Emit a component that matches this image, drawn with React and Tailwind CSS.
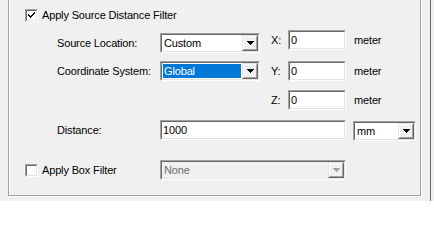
import React from 'react';

const Arrow = ({ color }) => (
  <svg width="7" height="4" viewBox="0 0 7 4" shapeRendering="crispEdges">
    <path d="M0 0h7L3.5 4z" fill={color} />
  </svg>
);

const DropButton = ({ disabled }) => (
  <div className="w-[16px] h-full border border-t-[#e3e3e3] border-l-[#e3e3e3] border-b-[#696969] border-r-[#696969]">
    <div className="h-full border border-t-white border-l-white border-b-[#a0a0a0] border-r-[#a0a0a0] bg-[#f0f0f0] flex items-center justify-center">
      <Arrow color={disabled ? '#a0a0a0' : '#000'} />
    </div>
  </div>
);

const Sunken = ({ className, children }) => (
  <div className={`h-[20px] border border-t-[#a0a0a0] border-l-[#a0a0a0] border-b-white border-r-white ${className}`}>
    <div className="h-full flex border border-t-[#696969] border-l-[#696969] border-b-[#e3e3e3] border-r-[#e3e3e3]">
      {children}
    </div>
  </div>
);

const TextBox = ({ value, className }) => (
  <Sunken className={className}>
    <div className="flex-1 bg-white flex items-center pl-px">{value}</div>
  </Sunken>
);

const Combo = ({ value, className, selected, disabled }) => (
  <Sunken className={className}>
    <div className={`flex-1 p-px flex ${disabled ? 'bg-[#f0f0f0]' : 'bg-white'}`}>
      <span
        className={`flex-1 flex items-center pl-px ${selected ? 'bg-[#0078d7] text-white' : ''} ${disabled ? 'text-[#6d6d6d]' : ''}`}
      >
        {value}
      </span>
    </div>
    <DropButton disabled={disabled} />
  </Sunken>
);

const Check = ({ checked }) => (
  <div className="w-[13px] h-[13px] shrink-0 border border-t-[#a0a0a0] border-l-[#a0a0a0] border-b-white border-r-white">
    <div className="w-full h-full bg-white border border-t-[#696969] border-l-[#696969] border-b-[#e3e3e3] border-r-[#e3e3e3]">
      {checked && (
        <svg width="9" height="9" viewBox="0 0 9 9" shapeRendering="crispEdges">
          <path d="M1 3h1v1h1v1h1V4h1V3h1V2h1V1h1v2H7v1H6v1H5v1H4v1H3V6H2V5H1z" fill="#000" />
        </svg>
      )}
    </div>
  </div>
);

export default function App() {
  return (
    <div className="flex w-[434px] h-[201px] bg-[#f0f0f0] overflow-hidden font-['Liberation_Sans',Arial,sans-serif] text-[11px] leading-[13px] tracking-[-0.15px] text-black">
      <div className="ml-[8px] w-[413px] h-[196px] shrink-0 flex flex-col border-l border-r border-b border-[#a0a0a0] shadow-[1px_1px_0_#fff,inset_1px_0_0_#fff]">
        <div className="flex items-center gap-[4px] mt-[9px] ml-[16px] h-[13px]">
          <Check checked />
          <span>Apply Source Distance Filter</span>
        </div>

        <div className="flex mt-[8px]">
          <div className="flex flex-col gap-[8px] pt-[3px] ml-[48px]">
            <div className="flex items-center">
              <span className="w-[103px]">Source Location:</span>
              <Combo value="Custom" className="w-[100px]" />
            </div>
            <div className="flex items-center">
              <span className="w-[103px]">Coordinate System:</span>
              <Combo value="Global" className="w-[100px]" selected />
            </div>
          </div>

          <div className="flex flex-col ml-[11px]">
            <div className="flex items-center">
              <span className="w-[17px]">X:</span>
              <TextBox value="0" className="w-[58px]" />
              <span className="ml-[8px]">meter</span>
            </div>
            <div className="flex items-center mt-[11px]">
              <span className="w-[17px]">Y:</span>
              <TextBox value="0" className="w-[58px]" />
              <span className="ml-[8px]">meter</span>
            </div>
            <div className="flex items-center mt-[9px]">
              <span className="w-[17px]">Z:</span>
              <TextBox value="0" className="w-[58px]" />
              <span className="ml-[8px]">meter</span>
            </div>
          </div>
        </div>

        <div className="flex items-start mt-[10px] h-[21px]">
          <span className="ml-[48px] w-[103px] self-center">Distance:</span>
          <TextBox value="1000" className="w-[186px]" />
          <Combo value="mm" className="w-[63px] ml-[7px] mt-px" />
        </div>

        <div className="flex items-center mt-[19px]">
          <div className="flex items-center gap-[4px] ml-[16px] w-[135px]">
            <Check />
            <span>Apply Box Filter</span>
          </div>
          <Combo value="None" className="w-[186px]" disabled />
        </div>
      </div>
      <div className="ml-[9px] w-px h-full bg-[#696969]" />
    </div>
  );
}
